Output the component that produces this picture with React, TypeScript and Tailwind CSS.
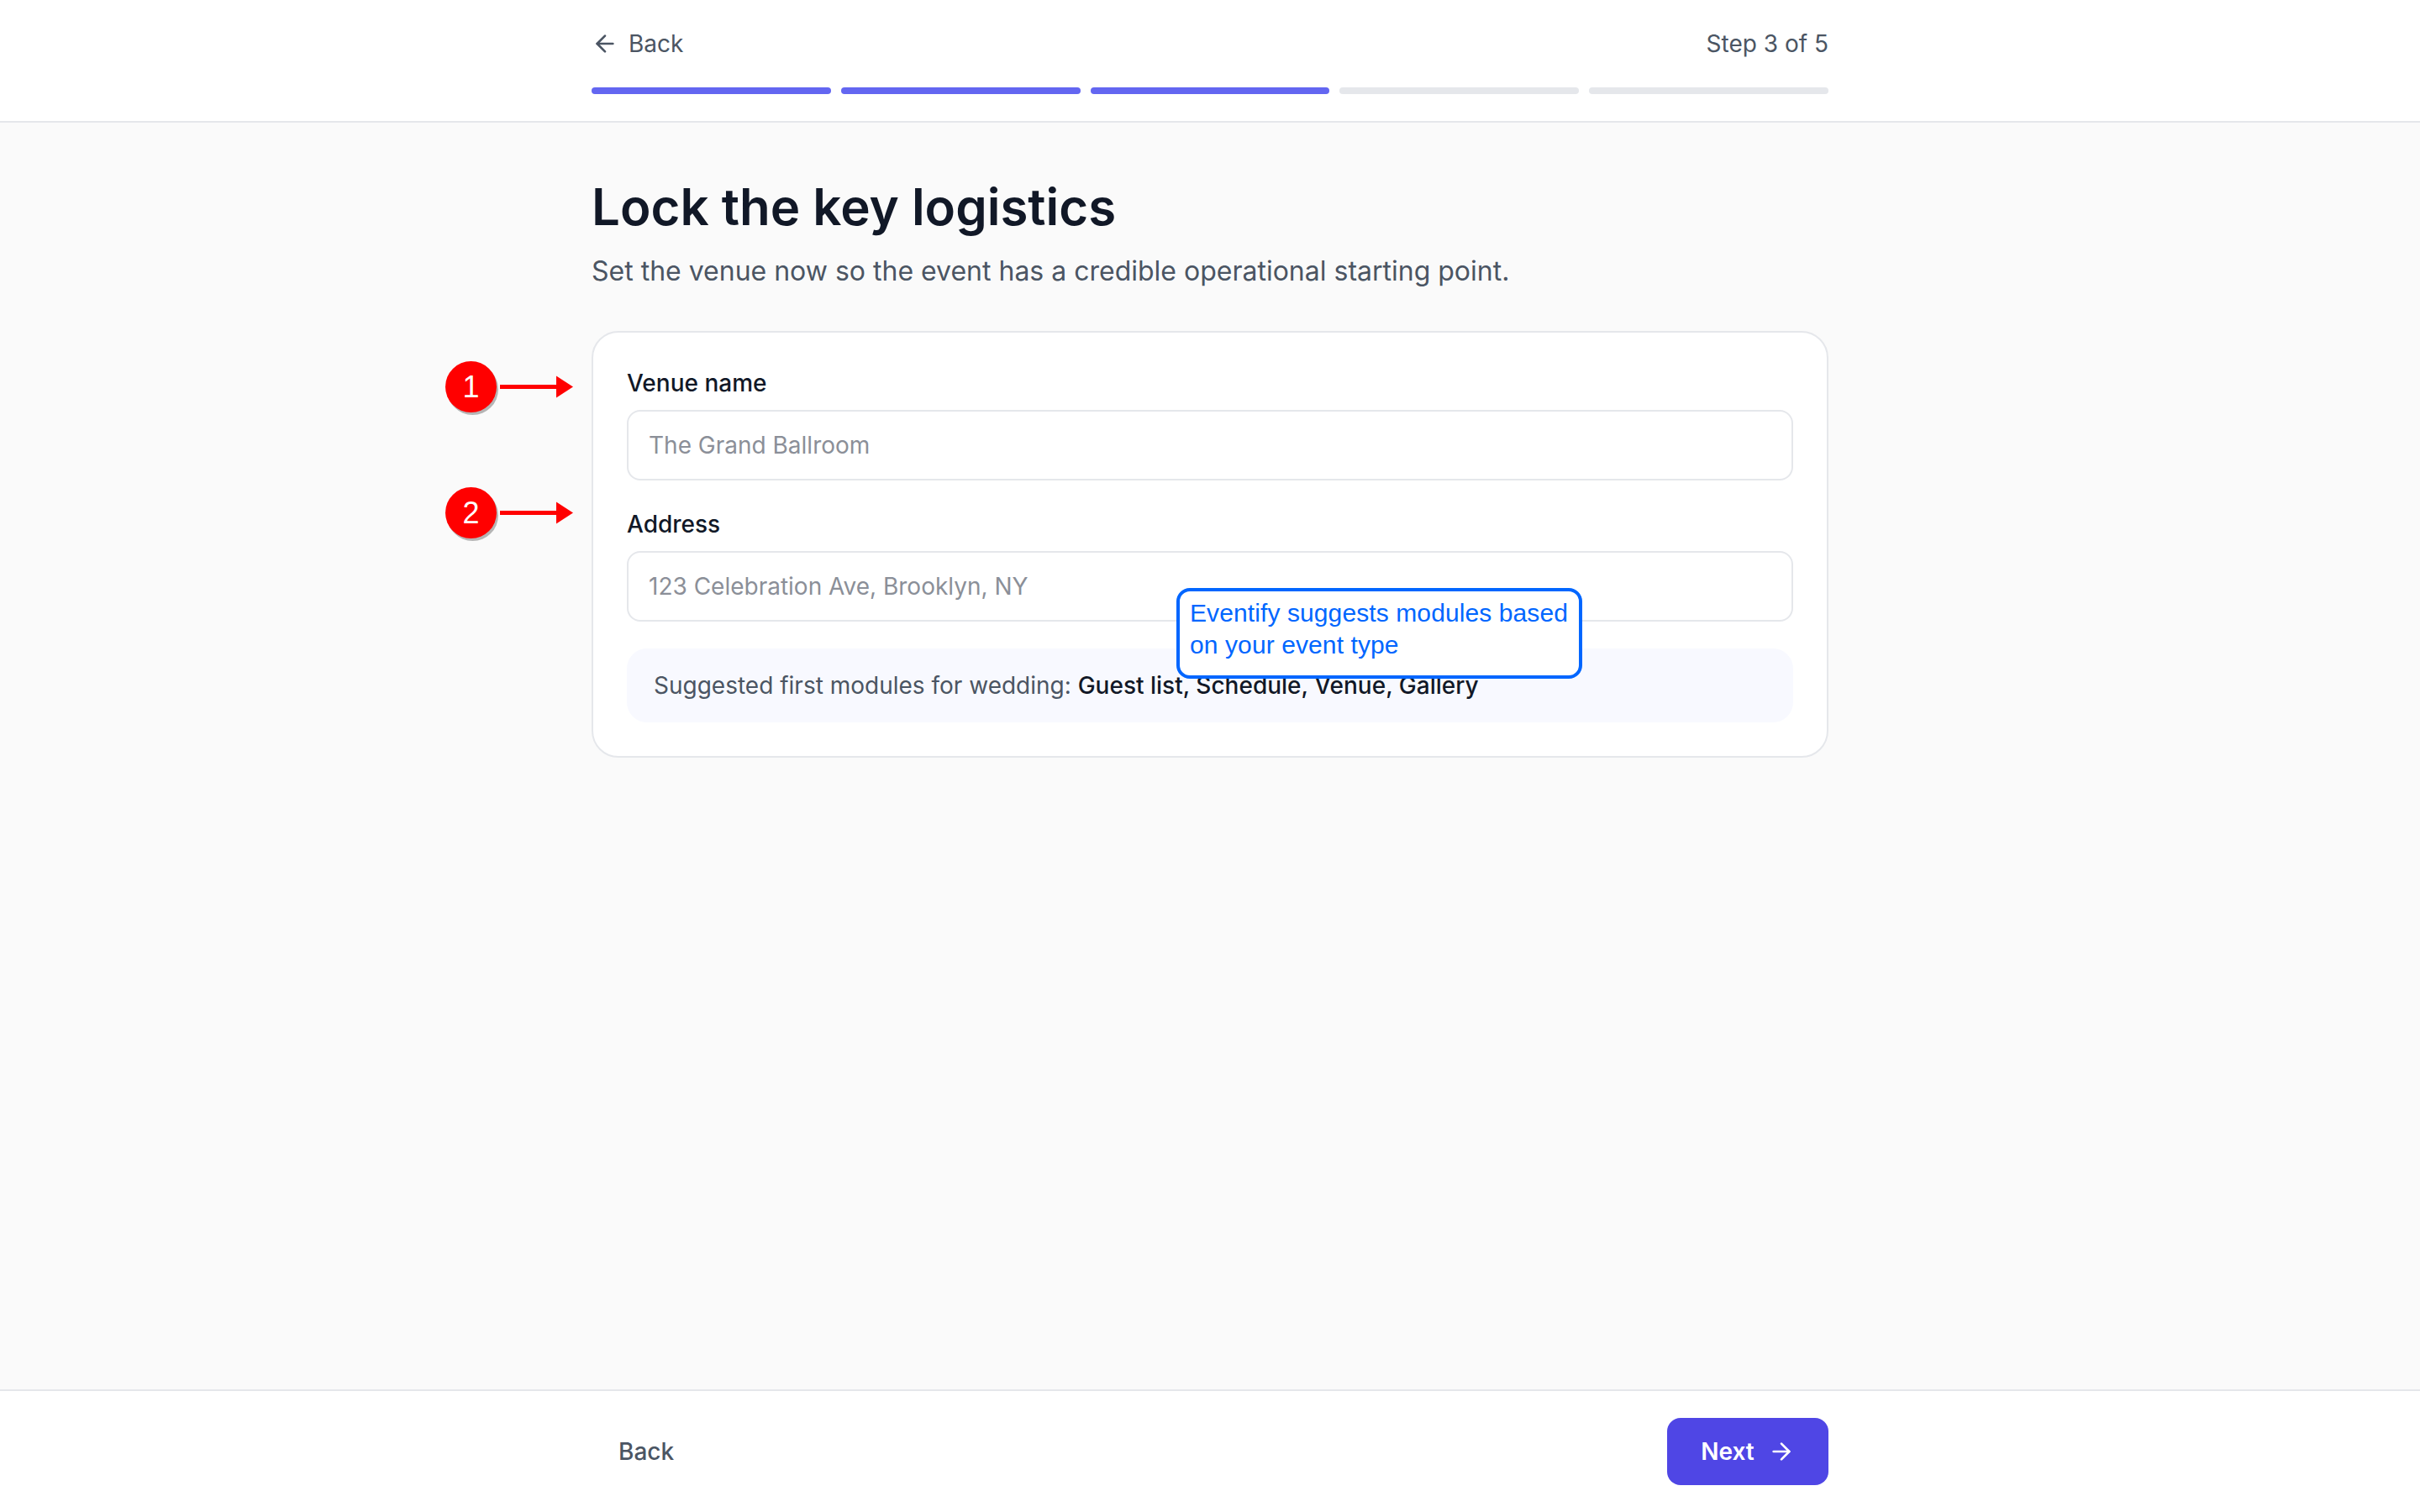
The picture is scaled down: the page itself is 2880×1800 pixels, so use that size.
import { ArrowLeft, ArrowRight } from "lucide-react";

const STEPS = [true, true, true, false, false];
const inputCls =
  "h-[84px] w-full rounded-[16px] border-2 border-[#e5e7eb] bg-white px-6 text-[28px] text-[#111827] " +
  "placeholder-[#8b8f98] outline-none";
const labelCls = "mb-3 block text-[28px] leading-[40px] font-medium text-[#111827]";

function Marker({ n, top }: { n: number; top: string }) {
  return (
    <div className={"absolute left-[530px] flex items-center " + top}>
      <div className="flex h-[61px] w-[61px] items-center justify-center rounded-full bg-[#ff0000] font-['Liberation_Sans',sans-serif] text-[36px] text-white shadow-[2px_3px_0_#b5b5b5]">
        {n}
      </div>
      <svg width="88" height="28" viewBox="0 0 88 28" className="ml-[4px]" fill="#ff0000">
        <rect x="0" y="11" width="70" height="5" />
        <polygon points="67,0.5 87,13.5 67,26.5" />
      </svg>
    </div>
  );
}

export default function App() {
  return (
    <div className="relative flex h-[1800px] flex-col bg-[#fafafa] font-['Inter',sans-serif]">
      <header className="border-b-2 border-[#e5e7eb] bg-white pt-8 pb-8">
        <div className="mx-auto w-[1472px]">
          <div className="mb-8 flex items-center justify-between text-[28px] leading-[40px] text-[#4b5563]">
            <button className="flex items-center gap-3">
              <ArrowLeft size={32} strokeWidth={2} />
              Back
            </button>
            <span>Step 3 of 5</span>
          </div>
          <div className="flex gap-3">
            {STEPS.map((done, i) => (
              <div key={i} className={"h-2 flex-1 rounded-full " + (done ? "bg-[#6366f1]" : "bg-[#e5e7eb]")} />
            ))}
          </div>
        </div>
      </header>

      <main className="flex-1 pt-16">
        <div className="mx-auto w-[1472px]">
          <h1 className="text-[60px] leading-[72px] font-semibold text-[#111827]">Lock the key logistics</h1>
          <p className="mt-[17px] mb-[47px] text-[32px] leading-[48px] text-[#4b5563]">
            Set the venue now so the event has a credible operational starting point.
          </p>
          <div className="rounded-[32px] border-2 border-[#e5e7eb] bg-white p-10">
            <label className={labelCls}>Venue name</label>
            <input className={inputCls} placeholder="The Grand Ballroom" />
            <label className={labelCls + " mt-8"}>Address</label>
            <input className={inputCls} placeholder="123 Celebration Ave, Brooklyn, NY" />
            <div className="mt-8 rounded-[24px] bg-[#f8f9ff] px-8 py-6 text-[28px] leading-[40px] text-[#4b5563]">
              Suggested first modules for wedding:{" "}
              <span className="font-medium text-[#111827]">Guest list, Schedule, Venue, Gallery</span>
            </div>
          </div>
        </div>
      </main>

      <footer className="border-t-2 border-[#e5e7eb] bg-white py-8">
        <div className="mx-auto flex w-[1472px] items-center justify-between">
          <button className="h-20 px-8 text-[28px] font-medium text-[#4b5563]">Back</button>
          <button className="flex h-20 w-[192px] items-center justify-center gap-4 rounded-[16px] bg-[#4f46e5] text-[28px] font-semibold text-white">
            Next
            <ArrowRight size={32} strokeWidth={2} />
          </button>
        </div>
      </footer>

      <Marker n={1} top="top-[430px]" />
      <Marker n={2} top="top-[580px]" />
      <div className="absolute top-[700px] left-[1400px] h-[108px] w-[483px] rounded-[16px] border-4 border-[#0066ff] bg-white px-3 py-[7px] font-['Liberation_Sans',sans-serif] text-[30px] leading-[38px] tracking-[0.1px] whitespace-nowrap text-[#0066ff]">
        Eventify suggests modules based
        <br />
        on your event type
      </div>
    </div>
  );
}
